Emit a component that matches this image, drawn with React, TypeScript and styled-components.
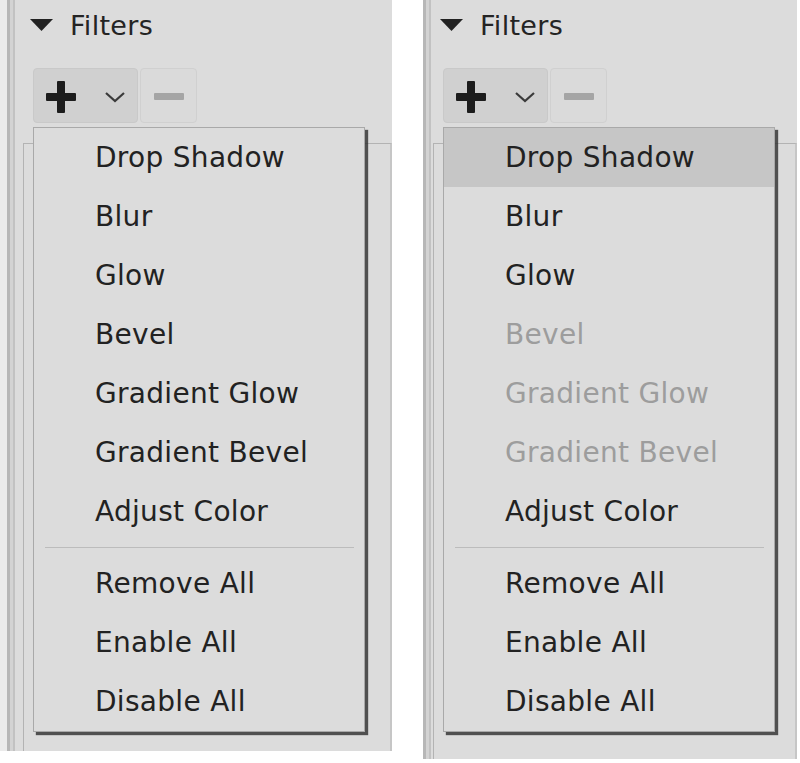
import React from "react";
import styled, { createGlobalStyle } from "styled-components";

const Global = createGlobalStyle`
  html, body { margin: 0; padding: 0; background: #ffffff; }
  body { font-family: "DejaVu Sans", Verdana, sans-serif; }
`;

const Page = styled.div`
  display: flex;
  align-items: flex-start;
  gap: 31px;
  width: 800px;
  height: 763px;
  overflow: hidden;
`;

const Panel = styled.section<{ $lead?: boolean; $w: number; $h: number; $pad: number }>`
  box-sizing: border-box;
  width: ${(p) => p.$w}px;
  height: ${(p) => p.$h}px;
  background: #dcdcdc;
  border-left: ${(p) => (p.$lead ? "7px solid #ebebeb" : "0")};
  box-shadow: inset 3px 0 0 #b7b7b7, inset 6px 0 0 #d3d3d3, inset 8px 0 0 #c2c2c2;
  padding-left: ${(p) => p.$pad}px;
  display: flex;
  flex-direction: column;
`;

const Header = styled.div`
  display: flex;
  align-items: center;
  gap: 17px;
  height: 50px;
  padding-left: 7px;
  color: #242424;
  font-size: 27px;
  letter-spacing: 0.3px;
`;

const Caret = styled.svg`
  width: 23px;
  height: 12px;
  flex: none;
`;

const Toolbar = styled.div`
  position: relative;
  display: flex;
  gap: 2px;
  margin-top: 18px;
  margin-left: 10px;
  height: 55px;
`;

const ToolButton = styled.div<{ $w: number; $pressed?: boolean }>`
  box-sizing: border-box;
  width: ${(p) => p.$w}px;
  height: 55px;
  border-radius: 4px;
  border: 1px solid ${(p) => (p.$pressed ? "#c9c9c9" : "#d0d0d0")};
  background: ${(p) => (p.$pressed ? "#d0d0d0" : "#dadada")};
  display: flex;
  align-items: center;
  justify-content: center;
  gap: 28px;
  padding-top: 2px;
`;

const ListBox = styled.div`
  flex: 1;
  margin-top: 20px;
  border-top: 1px solid #b3b3b3;
  border-left: 1px solid #b3b3b3;
  border-right: 2px solid #c6c6c6;
`;

const Menu = styled.ul`
  position: absolute;
  top: calc(100% + 4px);
  left: 0;
  z-index: 2;
  box-sizing: border-box;
  width: 332px;
  margin: 0;
  padding: 0;
  list-style: none;
  background: #dcdcdc;
  border: 1px solid #a9a9a9;
  box-shadow: 3px 3px 1px rgba(45, 45, 45, 0.8);
`;

const Item = styled.li<{ $disabled?: boolean; $active?: boolean }>`
  height: 59px;
  display: flex;
  align-items: center;
  padding-left: 61px;
  font-size: 28px;
  letter-spacing: 0.3px;
  white-space: nowrap;
  color: ${(p) => (p.$disabled ? "#9d9d9d" : "#222222")};
  background: ${(p) => (p.$active ? "#c6c6c6" : "transparent")};
`;

const Separator = styled.li`
  height: 0;
  margin: 6px 10px 6px 11px;
  border-top: 1px solid #bcbcbc;
`;

const PlusIcon = () => (
  <svg width="30" height="32" viewBox="0 0 30 32">
    <rect x="11" y="0" width="8" height="32" rx="1" fill="#1c1c1c" />
    <rect x="0" y="12" width="30" height="8" rx="1" fill="#1c1c1c" />
  </svg>
);

const ChevronIcon = () => (
  <svg width="22" height="12" viewBox="0 0 22 12">
    <path d="M2 2 L11 10 L20 2" fill="none" stroke="#3a3a3a" strokeWidth="2.2" />
  </svg>
);

const MinusIcon = () => (
  <svg width="30" height="7" viewBox="0 0 30 7">
    <rect x="0" y="0" width="30" height="7" rx="1" fill="#a5a5a5" />
  </svg>
);

type Entry = { label: string; disabled?: boolean; active?: boolean } | "sep";

const FilterPanel = ({
  lead,
  w,
  h,
  pad,
  entries,
}: {
  lead?: boolean;
  w: number;
  h: number;
  pad: number;
  entries: Entry[];
}) => (
  <Panel $lead={lead} $w={w} $h={h} $pad={pad}>
    <Header>
      <Caret viewBox="0 0 23 12">
        <path d="M0 0 H23 L11.5 12 Z" fill="#222" />
      </Caret>
      <span>Filters</span>
    </Header>
    <Toolbar>
      <ToolButton $w={105} $pressed>
        <PlusIcon />
        <ChevronIcon />
      </ToolButton>
      <ToolButton $w={57}>
        <MinusIcon />
      </ToolButton>
      <Menu>
        {entries.map((e, i) =>
          e === "sep" ? (
            <Separator key={i} />
          ) : (
            <Item key={i} $disabled={e.disabled} $active={e.active}>
              {e.label}
            </Item>
          )
        )}
      </Menu>
    </Toolbar>
    <ListBox />
  </Panel>
);

const leftEntries: Entry[] = [
  { label: "Drop Shadow" },
  { label: "Blur" },
  { label: "Glow" },
  { label: "Bevel" },
  { label: "Gradient Glow" },
  { label: "Gradient Bevel" },
  { label: "Adjust Color" },
  "sep",
  { label: "Remove All" },
  { label: "Enable All" },
  { label: "Disable All" },
];

const rightEntries: Entry[] = [
  { label: "Drop Shadow", active: true },
  { label: "Blur" },
  { label: "Glow" },
  { label: "Bevel", disabled: true },
  { label: "Gradient Glow", disabled: true },
  { label: "Gradient Bevel", disabled: true },
  { label: "Adjust Color" },
  "sep",
  { label: "Remove All" },
  { label: "Enable All" },
  { label: "Disable All" },
];

export default function App() {
  return (
    <>
      <Global />
      <Page>
        <FilterPanel lead w={392} h={751} pad={16} entries={leftEntries} />
        <FilterPanel w={374} h={759} pad={10} entries={rightEntries} />
      </Page>
    </>
  );
}
